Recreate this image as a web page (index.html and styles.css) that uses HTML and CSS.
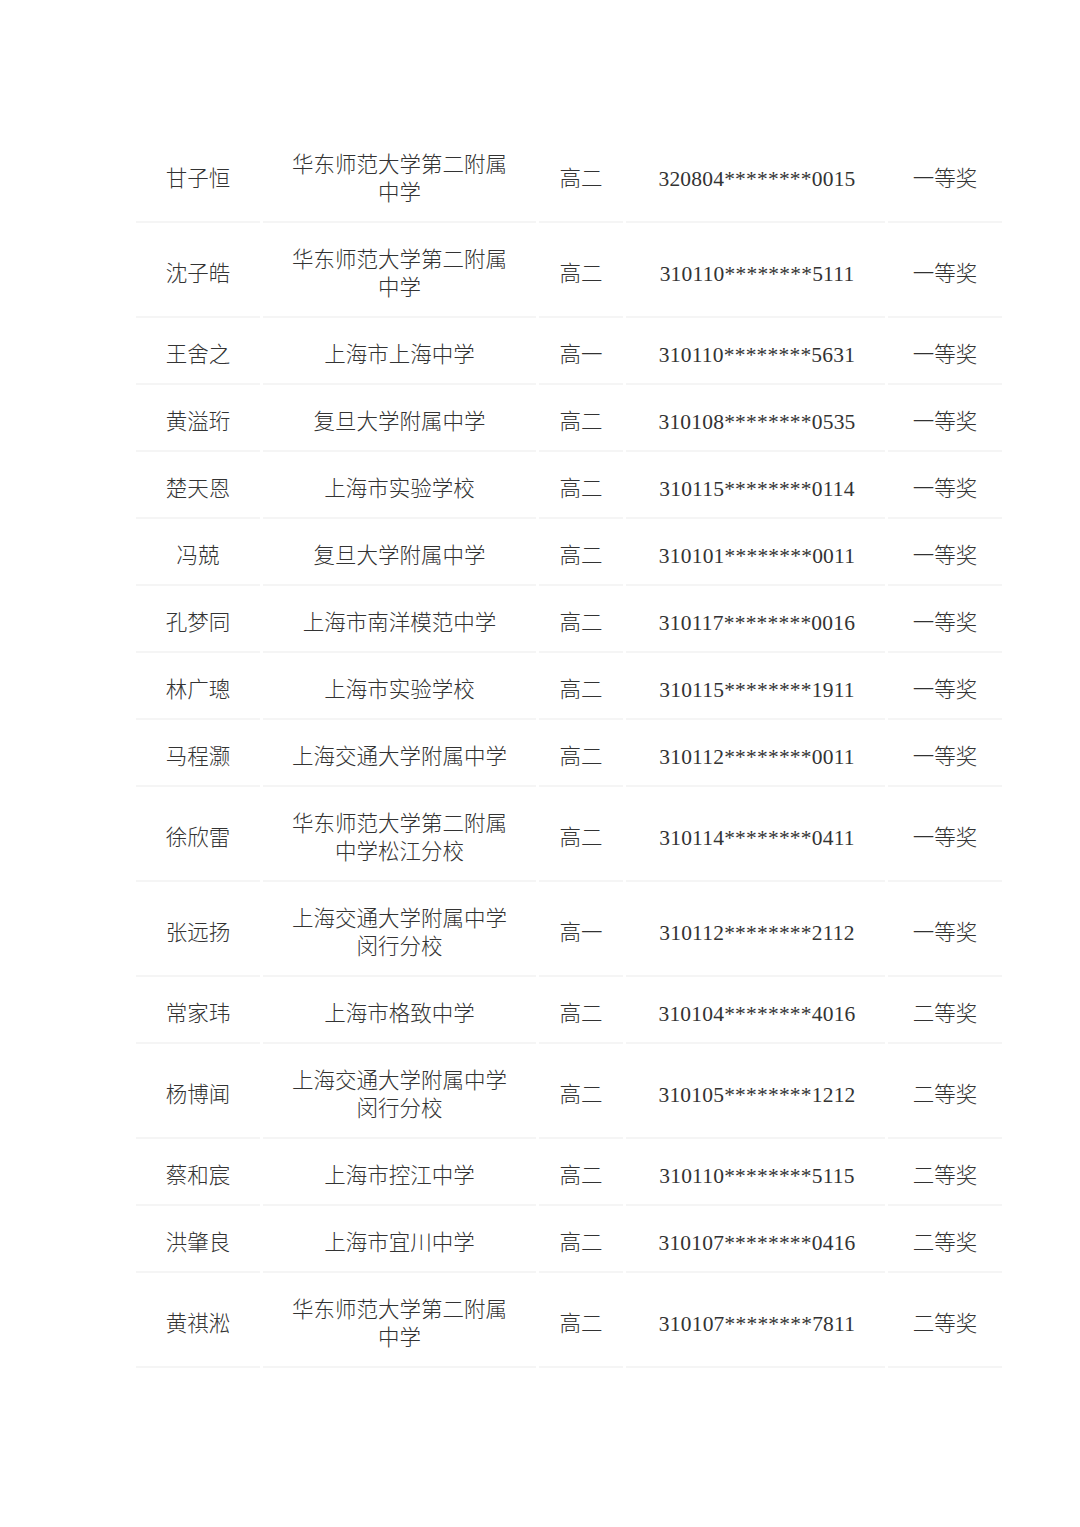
FILE: index.html
```html
<!DOCTYPE html>
<html lang="zh-CN">
<head>
<meta charset="utf-8">
<title>获奖名单</title>
<link rel="stylesheet" href="styles.css">
</head>
<body>
<div class="page">
  <div class="table">
    <div class="row"><div class="cell">甘子恒</div><div class="cell">华东师范大学第二附属<br>中学</div><div class="cell">高二</div><div class="cell num">320804********0015</div><div class="cell">一等奖</div></div>
    <div class="row"><div class="cell">沈子皓</div><div class="cell">华东师范大学第二附属<br>中学</div><div class="cell">高二</div><div class="cell num">310110********5111</div><div class="cell">一等奖</div></div>
    <div class="row"><div class="cell">王舍之</div><div class="cell">上海市上海中学</div><div class="cell">高一</div><div class="cell num">310110********5631</div><div class="cell">一等奖</div></div>
    <div class="row"><div class="cell">黄溢珩</div><div class="cell">复旦大学附属中学</div><div class="cell">高二</div><div class="cell num">310108********0535</div><div class="cell">一等奖</div></div>
    <div class="row"><div class="cell">楚天恩</div><div class="cell">上海市实验学校</div><div class="cell">高二</div><div class="cell num">310115********0114</div><div class="cell">一等奖</div></div>
    <div class="row"><div class="cell">冯兢</div><div class="cell">复旦大学附属中学</div><div class="cell">高二</div><div class="cell num">310101********0011</div><div class="cell">一等奖</div></div>
    <div class="row"><div class="cell">孔梦同</div><div class="cell">上海市南洋模范中学</div><div class="cell">高二</div><div class="cell num">310117********0016</div><div class="cell">一等奖</div></div>
    <div class="row"><div class="cell">林广璁</div><div class="cell">上海市实验学校</div><div class="cell">高二</div><div class="cell num">310115********1911</div><div class="cell">一等奖</div></div>
    <div class="row"><div class="cell">马程灏</div><div class="cell">上海交通大学附属中学</div><div class="cell">高二</div><div class="cell num">310112********0011</div><div class="cell">一等奖</div></div>
    <div class="row"><div class="cell">徐欣雷</div><div class="cell">华东师范大学第二附属<br>中学松江分校</div><div class="cell">高二</div><div class="cell num">310114********0411</div><div class="cell">一等奖</div></div>
    <div class="row"><div class="cell">张远扬</div><div class="cell">上海交通大学附属中学<br>闵行分校</div><div class="cell">高一</div><div class="cell num">310112********2112</div><div class="cell">一等奖</div></div>
    <div class="row"><div class="cell">常家玮</div><div class="cell">上海市格致中学</div><div class="cell">高二</div><div class="cell num">310104********4016</div><div class="cell">二等奖</div></div>
    <div class="row"><div class="cell">杨博闻</div><div class="cell">上海交通大学附属中学<br>闵行分校</div><div class="cell">高二</div><div class="cell num">310105********1212</div><div class="cell">二等奖</div></div>
    <div class="row"><div class="cell">蔡和宸</div><div class="cell">上海市控江中学</div><div class="cell">高二</div><div class="cell num">310110********5115</div><div class="cell">二等奖</div></div>
    <div class="row"><div class="cell">洪肇良</div><div class="cell">上海市宜川中学</div><div class="cell">高二</div><div class="cell num">310107********0416</div><div class="cell">二等奖</div></div>
    <div class="row"><div class="cell">黄祺淞</div><div class="cell">华东师范大学第二附属<br>中学</div><div class="cell">高二</div><div class="cell num">310107********7811</div><div class="cell">二等奖</div></div>
  </div>
</div>
</body>
</html>
```
FILE: styles.css
```css
html, body {
  margin: 0;
  padding: 0;
  background: #ffffff;
}
.page {
  width: 1080px;
  padding-top: 128px;
  padding-left: 136px;
  box-sizing: border-box;
}
.table {
  width: 866px;
  display: flex;
  flex-direction: column;
  font-family: "Liberation Serif", "Noto Sans CJK SC", serif;
  font-size: 21.5px;
  font-weight: 300;
  color: #333333;
}
.row {
  display: grid;
  grid-template-columns: 124px 273px 84px 259px 114px;
  column-gap: 3px;
}
.cell {
  display: flex;
  align-items: center;
  justify-content: center;
  text-align: center;
  line-height: 28px;
  padding: 23px 0 14px;
  border-bottom: 2px solid #f5f5f5;
  white-space: nowrap;
}
.num {
  padding-left: 3px;
  letter-spacing: 0.2px;
}
```
